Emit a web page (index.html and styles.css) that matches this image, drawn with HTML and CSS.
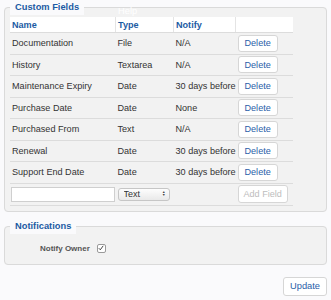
FILE: index.html
```html
<!DOCTYPE html>
<html>

<head>
    <title>Custom Fields</title>
    <link rel="stylesheet" href="styles.css">
</head>

<body>
    <form id="fields-form">
        <fieldset class="panel">
            <legend class="panel-title">Custom Fields</legend>
            <span class="help-link">Help</span>
            <table class="fields">
                <thead>
                    <tr>
                        <th class="col-name">Name</th>
                        <th class="col-type">Type</th>
                        <th class="col-notify">Notify</th>
                        <th class="col-action"></th>
                    </tr>
                </thead>
                <tbody>
                    <tr>
                        <td>Documentation</td>
                        <td>File</td>
                        <td>N/A</td>
                        <td><button type="button" class="btn">Delete</button></td>
                    </tr>
                    <tr>
                        <td>History</td>
                        <td>Textarea</td>
                        <td>N/A</td>
                        <td><button type="button" class="btn">Delete</button></td>
                    </tr>
                    <tr>
                        <td>Maintenance Expiry</td>
                        <td>Date</td>
                        <td>30 days before</td>
                        <td><button type="button" class="btn">Delete</button></td>
                    </tr>
                    <tr>
                        <td>Purchase Date</td>
                        <td>Date</td>
                        <td>None</td>
                        <td><button type="button" class="btn">Delete</button></td>
                    </tr>
                    <tr>
                        <td>Purchased From</td>
                        <td>Text</td>
                        <td>N/A</td>
                        <td><button type="button" class="btn">Delete</button></td>
                    </tr>
                    <tr>
                        <td>Renewal</td>
                        <td>Date</td>
                        <td>30 days before</td>
                        <td><button type="button" class="btn">Delete</button></td>
                    </tr>
                    <tr>
                        <td>Support End Date</td>
                        <td>Date</td>
                        <td>30 days before</td>
                        <td><button type="button" class="btn">Delete</button></td>
                    </tr>
                    <tr class="new-row">
                        <td><input type="text" class="field-input" name="FieldName"></td>
                        <td>
                            <span class="select-wrap">
                                <select class="field-select" name="FieldType">
                                    <option>Text</option>
                                    <option>Textarea</option>
                                    <option>Date</option>
                                    <option>File</option>
                                </select>
                                <span class="select-arrows">&#9650;<br>&#9660;</span>
                            </span>
                        </td>
                        <td></td>
                        <td><button type="button" class="btn btn-add" disabled>Add Field</button></td>
                    </tr>
                </tbody>
            </table>
        </fieldset>

        <fieldset class="panel panel-notify">
            <legend class="panel-title">Notifications</legend>
            <div class="notify-row">
                <label class="notify-label">Notify Owner</label>
                <span class="check">
                    <svg width="6" height="6" viewBox="0 0 6 6">
                        <path d="M0.8 3.2 L2.3 4.8 L5.2 0.8" fill="none" stroke="#333" stroke-width="0.9" />
                    </svg>
                </span>
            </div>
        </fieldset>

        <div class="actions">
            <button type="submit" class="btn btn-update">Update</button>
        </div>
    </form>
</body>

</html>
```

FILE: styles.css
```css
body {
    margin: 0;
    background-color: #fafafc;
    font-family: "Liberation Sans", Arial, sans-serif;
    font-size: 9.1px;
    color: #333;
}

form {
    padding: 0 4px;
}

.panel {
    position: relative;
    margin: 0;
    padding: 2px 5px 5px 5px;
    border: 1px solid #dadada;
    border-radius: 4px;
    background-color: #f2f2f2;
}

.panel-title {
    margin-left: 0;
    padding: 0 5px;
    font-size: 9.3px;
    font-weight: bold;
    color: #1c5ba3;
    background-color: #fafafc;
    line-height: 15px;
}

.help-link {
    position: absolute;
    top: -9px;
    left: 113px;
    color: #fff;
    font-size: 9.3px;
}

.fields {
    width: 283px;
    table-layout: fixed;
    border-collapse: collapse;
}

.fields th {
    height: 15px;
    padding: 0 2px;
    text-align: left;
    font-weight: bold;
    color: #1c5ba3;
    background-color: #fff;
    border-right: 1px solid #e4e4e4;
    border-bottom: 1px solid #dcdcdc;
}

.fields th.col-action {
    border-right: none;
}

.col-name {
    width: 101px;
}

.col-type {
    width: 53px;
}

.col-notify {
    width: 57px;
}

.fields td {
    height: 20.5px;
    padding: 0 2px;
    border-bottom: 1px solid #dcdcdc;
    white-space: nowrap;
}

.btn {
    margin-left: 0;
    padding: 0 6px;
    height: 17px;
    font-family: "Liberation Sans", Arial, sans-serif;
    font-size: 9.1px;
    color: #2a5ea8;
    background-color: #fff;
    border: 1px solid #d6d6d6;
    border-radius: 3px;
}

.btn-add {
    height: 18px;
    padding: 0 5px;
    color: #bdbdbd;
}

.new-row td {
    height: 21px;
}

.field-input {
    display: block;
    box-sizing: border-box;
    width: 104px;
    height: 15px;
    margin: 0 0 0 -1px;
    padding: 0 3px;
    border: 1px solid #cfcfcf;
    background-color: #fff;
}

.select-wrap {
    position: relative;
    display: inline-block;
}

.field-select {
    -webkit-appearance: none;
    appearance: none;
    box-sizing: border-box;
    width: 52px;
    height: 13px;
    padding: 0 0 0 5px;
    font-family: "Liberation Sans", Arial, sans-serif;
    font-size: 9px;
    color: #333;
    background: linear-gradient(#fdfdfd, #e9e9e9);
    border: 1px solid #c6c6c6;
    border-radius: 3px;
    vertical-align: middle;
}

.select-arrows {
    position: absolute;
    top: 3px;
    right: 4px;
    font-size: 3.5px;
    line-height: 3.5px;
    color: #444;
}

.panel-notify {
    margin-top: 7px;
    padding: 10px 5px 11px 5px;
}

.notify-row {
    display: flex;
    align-items: center;
    padding-left: 30px;
}

.notify-label {
    font-size: 8px;
    font-weight: bold;
    color: #555;
}

.check {
    display: flex;
    align-items: center;
    justify-content: center;
    width: 7px;
    height: 7px;
    margin-left: 7px;
    border: 1px solid #9a9a9a;
    border-radius: 2px;
    background-color: #fff;
}

.actions {
    display: flex;
    justify-content: flex-end;
    padding: 12px 0 0 0;
}

.btn-update {
    margin: 0;
    height: 19px;
    padding: 0 6px;
    font-size: 9.3px;
}
```
